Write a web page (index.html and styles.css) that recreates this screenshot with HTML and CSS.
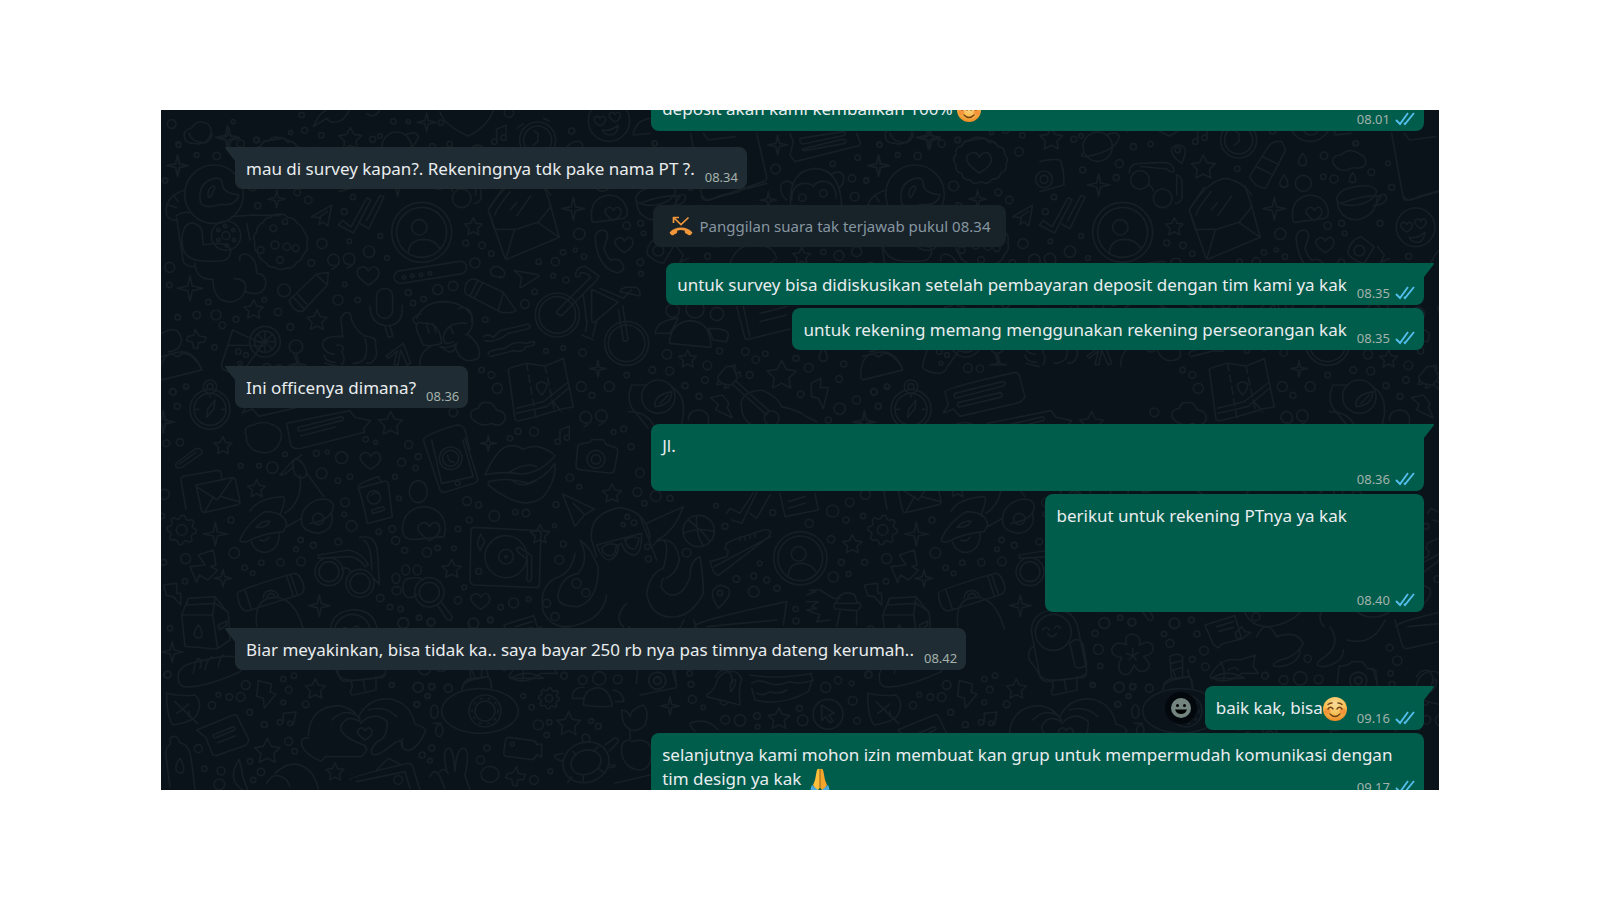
FILE: index.html
```html
<!DOCTYPE html>
<html lang="id">
<head>
<meta charset="utf-8">
<meta name="viewport" content="width=device-width, initial-scale=1">
<title>Obrolan</title>
<link rel="stylesheet" href="styles.css">
</head>
<body>
<svg class="defs" aria-hidden="true">
  <defs>
    <symbol id="ticks" viewBox="0 0 20 14"><path d="M1 8l4 4L13 1M9 11l1 1L19 1" fill="none" stroke="currentColor" stroke-width="1.9"/></symbol>
    <radialGradient id="skin" cx="50%" cy="30%" r="75%"><stop offset="0" stop-color="#f6dc9c"/><stop offset=".55" stop-color="#f8c055"/><stop offset="1" stop-color="#e8801c"/></radialGradient>
    <symbol id="blush" viewBox="0 0 24 24">
      <circle cx="12" cy="12" r="12" fill="url(#skin)"/>
      <circle cx="4.500" cy="14" r="3" fill="#f4782c" opacity=".55"/><circle cx="19.500" cy="14" r="3" fill="#f4782c" opacity=".55"/>
      <path d="M5 12q2.500-3.500 5 0M14 12q2.500-3.500 5 0M7 17q5 5 10 0M5 7.500q1.500-1.500 4-1.500M15 6q2.500 0 4 1.500" fill="none" stroke="#6e4014" stroke-width="1.400" stroke-linecap="round"/>
    </symbol>
    <symbol id="pray" viewBox="0 0 20 24">
      <path d="M9.700 1Q7 0 6.500 4L5 12 3 17l4 6 2.700-3z" fill="#fbbf3c"/><path d="M10.300 1Q13 0 13.500 4L15 12l2 5-4 6-2.700-3z" fill="#f5a52c"/>
      <path d="M10 2v18" stroke="#d97a16"/>
      <path d="M2 17l6 5-2 2H1q-1-4 1-7zM18 17l-6 5 2 2h5q1-4-1-7z" fill="#4ba9dc"/>
    </symbol>
  </defs>
</svg>
<main class="chat">
  <svg class="wallpaper" viewBox="161 110 1278 680" preserveAspectRatio="xMinYMin slice" aria-hidden="true">
    <defs>
    <g id="tile">
      <g transform="translate(150 100) scale(.3333)" data-dots="65,72,13 86,135,7 45,242,7 140,165,7 200,168,11 272,131,11 319,120,7 249,65,6 455,45,8 464,91,9 422,98,6 514,106,8 730,64,8 690,108,7 775,65,6 873,68,8 1077,38,14 1265,93,9 323,317,9 475,300,11 609,291,8 583,335,9 516,431,15 598,424,7 484,489,10 691,408,7 657,455,17 711,474,7 947,429,9 996,436,10 1024,461,8 975,489,15 584,553,7 402,571,19 564,600,15 623,600,8 775,578,9 789,609,8 821,597,8 863,569,15 909,558,14 1166,485,8 1216,485,12 1239,457,8 1302,470,8 1276,450,6 1288,402,17 1430,377,11 1472,370,9 1481,400,7 1471,487,10 1473,521,7 1210,527,7 1248,540,9 1154,575,8 1125,612,13 1006,659,8 59,502,15 58,555,8 175,606,8 83,652,8 140,645,11 198,645,15 258,658,9 217,676,10 343,599,7 384,636,11 421,681,10 193,742,8 109,859,7 69,876,9 1188,753,7 1240,744,7 1298,758,11 995,810,8 1024,825,10 1042,865,15 1430,825,8 1294,860,15 1378,860,15 1326,886,9 1104,994,9 1152,995,13 1080,1015,8 1421,987,9 1391,996,7 647,1018,8 677,1027,6 776,1034,12 49,1030,10 90,1027,11 910,937,13 762,532,5 787,527,5 813,524,5 840,520,5 370,385,10 375,435,12 410,440,11 437,445,10 332,450,10 390,480,10 405,365,8 205,390,5 225,378,5 250,390,5 205,420,5 230,436,5 252,420,5 265,755,8 288,765,7 270,790,6"
         data-stars="601,118,36 970,381,28 311,630,30 501,662,32 722,972,38" data-sparks="83,197,32 380,297,26 120,565,38 232,112,36 830,67,28 1270,326,34 1344,806,25 40,966,34" data-hearts="655,525,30 1423,433,25 1350,62,16 1395,50,16 1390,340,22">
        <path d="M105 118q-10-28 20-34q15-28 45-14q22 16 8 42q-16 26-45 18q-22 0-28-12M330 140q15-25 40-20q30-10 40 0q25 5 30 20M490 80q20-50 60-60l50 5q-20 50-60 40l-10-10zM650 40q20 20 40-10M870 35q10 40 85 73q60-30 75-78"/>
        <circle cx="740" cy="140" r="44"/><path d="M695 160q-10 10 10 10q90-15 100-60q-5-20-40-5"/>
        <path d="M1040 125V88l28-12v35"/><circle cx="1033" cy="125" r="8"/><circle cx="1061" cy="113" r="8"/>
        <circle cx="1163" cy="120" r="54"/><circle cx="1163" cy="120" r="42"/><path d="M1152 92l12 8v24l-14 12M1100 85l20-14M1180 55l18 8"/>
        <circle cx="1377" cy="62" r="62"/><path d="M1357 90q25 5 48-15q-3 30-25 30q-18-2-23-15zM1450 100q10-40 50-45M1450 105l50-5"/>
        <circle cx="192" cy="283" r="88"/><path d="M152 310q-12-60 40-75q25-5 25 20q5 25 50 30q-10 35-55 28q-45 15-60-3zM175 290q-5-25 15-32q10 2-2 18q-5 20-13 14z"/>
        <path d="M105 270q-65 20-55 75q8 18 30 15M70 285l15 20M55 315l25 8M80 355l20 130q10 18 34 14M78 348q20-15 40-10M160 435q80-15 82 20q-5 30-35 28q-70 5-90-12q-25-15-20-65q5-35 30-38q32 10 30 35zM245 350l60-5 85 2M290 370l10 50"/>
        <path d="M387 343q18-3 25 10q20-2 28 15q20 10 22 28q15 15 8 32q8 20-10 35q-5 20-20 24q-10 20-30 17q-20 10-35-2q-20 2-28-15q-20-8-22-25q-15-14-10-34q-10-20 5-32q0-20 18-27q8-18 25-17q10-12 24-9z"/>
        <circle cx="228" cy="407" r="44"/><circle cx="228" cy="407" r="12"/>
        <path d="M134 490q5 50 55 48q0 65 50 68q45-5 48-45q0-25-35-25M285 575q60 20 63-30q-5-25-28-25q0-50-35-58q-20 0-15 20"/>
        <path d="M418 600l82-78 35-5-3 38-75 80q-30 0-39-35zM430 592l32 34M440 580l30 32M500 525l30 28"/>
        <path d="M545 508q25-10 22-30a17 17 0 1 0-12 18M590 505q27-10 24-30a17 17 0 1 0-12 18M1302 980q25-10 22-30a17 17 0 1 0-12 18M1347 975q27-10 24-30a17 17 0 1 0-12 18M1050 535q20-5 12-22q-20-25-40-5q-5 25 30 22"/>
        <path d="M565 375l12-14 26 20 48-88 12 6-52 100zM632 372l25 14 45-95-12-5-40 75M485 350l60-34-12 62-14-12-12 8 4-20zM508 352l24-18"/>
        <circle cx="815" cy="397" r="90"/><circle cx="815" cy="397" r="75"/><circle cx="808" cy="382" r="23"/><path d="M775 462q0-42 45-44q35 0 50 28"/>
        <rect x="731" y="498" width="220" height="38" rx="19" transform="rotate(-9 841 517)"/>
        <path d="M1015 330l45-68M1015 330l50 145q4 3 8 2l155-65-32-115-15-40M1015 330l18 58h60M1093 390l-24 82M1093 390l70-23 65 45M1165 367l36-45M1035 345q0-12 45-70M1080 330l20-22M1100 348l42-60"/>
        <path d="M1335 410q10-25 30-18q12 5 5 28l-8 25q10 30 22 36q25-12 38 20q-5 20-25 16q-55-15-62-107zM1325 350q-5-55 50-65q50 2 57 50q2 15-12 20l-90 12q-5 0-5-17z"/>
        <rect x="680" y="565" width="48" height="90" rx="24"/><path d="M660 620q2 55 55 58q45-5 42-62M705 680l10 32 14-4-10-32"/>
        <path d="M945 565q5-30 30-28l85 40 38 55q-10 8-45 5l-105-55q-5-5-3-17zM985 540l-25 48M998 548l-25 46M1060 580l-15 50M1093 512l70 12q8 3 2 6l-50 32q-5 2-5-4l5-25z"/>
        <circle cx="1222" cy="645" r="66"/><circle cx="1222" cy="645" r="55"/><circle cx="1430" cy="730" r="66"/><circle cx="1430" cy="730" r="55"/>
        <path d="M1222 632l100-100q-12-15-30-14q-5 20-15 10q0-30 30-28l40 28-6 12-105 106q-20-2-14-14zM1325 568l80 38-70 60q-10 5-10-10zM1300 585l10 80M1405 630l15 90q10 8 14-2l-16-100M1350 565l70 30 25-25M1410 575q5-18 50-12q12 5 10 25zM1340 665l-12 45M1312 665l-5 30M1295 705l35 15"/>
        <path d="M797 672q-20-20 15-30M800 655q20-50 85-50q60 5 82 45q5 40-20 55M800 690q-5-30 20-20q50-5 55 60q-20 10-55 5zM950 670q-60-5-70 40q0 30 30 15M870 740q25 8 50-10q-5 30-25 25zM850 735q-45 20-40 65M915 740q20 60 70 35q15-35-30-70M925 625q45-10 40 40M830 675l8 25M850 670l8 28M900 680l10 20"/>
        <path d="M578 712l-5-55q12-30 28-15q5 40 40 65q30 5 35 12l4 45q-10 30-30 25M578 710q-60-5-60 25q5 25 35 28M522 765q5 22 35 22M525 790l40 10M560 735q30 0 15 20q15 25 0 40M645 715q10 30 0 60q-15 15-35 15M708 768l52-38 22 60-10 5-20-45-8 45-12-2 10-40-28 22z"/>
        <path d="M1000 710q15-10 30 2l20-20 85-20q12 8-5 16l-55 12q-40 30-70 22M1015 765q-5-15 50-20q30-25 60-15l28-5q5 15-25 15q-10 20-38 12l-70 18"/>
        <path d="M248 690l90 42-50 70q-10 30-60 10q-20-5-10-30zM235 735l105 3"/><circle cx="345" cy="725" r="46"/><circle cx="345" cy="725" r="32"/><path d="M345 693v64M313 725h64M322 702l46 46M368 702l-46 46"/>
        <circle cx="438" cy="740" r="20"/><path d="M432 762l10 28-25 5h50l-20-5-8-28M135 688l12 20 22 4-6 14-18 2-2 18-12-2-4-18-18-4 4-12 18-4z"/>
        <path d="M35 700q50-30 60 20q-5 35-40 35M35 770l35-10q60-20 85 50l-120 30"/>
        <circle cx="180" cy="928" r="60"/><circle cx="180" cy="928" r="48"/><circle cx="180" cy="860" r="20"/><circle cx="180" cy="860" r="9"/><path d="M195 900l-22 28-3 24 22-26zM180 882v10M136 928h10M214 928h10"/>
        <path d="M410 970l190-38 15 20 47 10-22 25 4 10-190 48q-30 5-33-15zM445 982l130-32q12 5 0 12l-125 32q-10-4-5-12M452 1008l105-27"/>
        <path d="M290 1010q-15-30 20-35q30-15 60 0q35 15 20 50q-20 50-80 25q-25-20-20-40M965 955q-10-25 20-30q5-25 40-15q10 10 15 20q30 5 25 30q-15 25-40 10q-30 15-60-15"/>
        <path d="M1075 808q5-5 55-18l55 8 55-22 30 145-30 5-75 22-60 15-10-5zM1100 940l90-20 65-55M1100 925l80-20 70-55M1205 900l30 35M1175 885q-18-20-15-32q15-15 30 0q3 12-15 32z"/><path d="M1130 790l28 165M1185 798l30 140" stroke-dasharray="22 14"/>
        <path d="M820 1020q0-15 100-45q20 0 25 15l15 60M1230 1025v-35l28-12v35"/><circle cx="1223" cy="1025" r="8"/><circle cx="1251" cy="1013" r="8"/>
      </g>
      <g transform="translate(150 440) scale(.3333)" data-dots="405,43,7 499,40,9 532,36,6 272,77,7 327,77,7 367,83,17 515,100,16 575,53,18 600,110,8 564,122,8 755,67,12 805,50,9 797,84,8 735,110,7 747,175,7 585,187,13 583,223,7 605,258,16 565,305,10 490,316,9 452,300,8 438,328,7 453,364,13 391,367,11 334,368,8 284,383,8 308,400,7 253,339,16 243,240,9 107,356,15 105,424,8 43,163,15 686,275,8 727,267,10 737,302,12 764,331,9 831,337,14 863,324,8 912,325,7 924,267,8 958,240,9 951,183,13 986,195,9 1033,228,16 1096,216,8 1128,219,11 1260,113,11 1288,140,7 1218,194,9 1214,257,6 1240,312,9 1228,359,13 1462,156,13 1470,98,13 1443,20,9 691,474,11 720,501,8 752,507,8 760,549,16 808,533,7 844,546,11 924,481,11 943,442,7 986,394,9 1052,502,8 1091,489,15 1136,478,7 971,550,15 1021,540,9 60,565,8 53,704,10 287,735,13 205,764,7 238,771,10 272,771,13 186,796,11 299,817,9 343,854,9 400,717,8 432,707,8 416,749,10 400,787,7 467,793,10 416,904,12 434,934,8 145,926,12 163,986,8 213,993,12 300,964,8 333,996,11 310,1020,8 208,1033,16 805,742,15 846,740,9 895,745,12 833,768,7 726,735,7 801,793,8 845,924,9 817,945,9 840,962,7 1011,924,9 992,960,12 1120,768,7 1145,802,8 1165,855,15 1198,847,8 1190,885,8 1243,707,10 1324,843,7 1345,859,9 1152,1020,13 1201,994,7 1432,230,7 1452,248,8 1420,254,6"
         data-stars="219,18,28 320,147,28 1386,162,30 1170,284,30 905,388,30 496,748,32 352,935,40 1256,853,38 555,997,28" data-sparks="196,282,36 219,415,26 508,497,32 67,636,32 1015,10,24" data-hearts="662,60,28 992,482,26 838,272,30 645,880,20" data-gears="95,270,44 1197,775,32">
        <path d="M78 70l60-45q20 0 18 15l-60 42q-22 8-18-12zM88 72l50-35M108 208L93 120q0-10 10-12l100-17q12 0 12 22M138 135l108-22q8 0 10 6l14 65q0 8-6 10l-100 24q-8 0-10-8zM140 140l62 40 46-65M165 215l25-45M268 185l-55-15"/>
        <path d="M270 300q20-50 75-85q60 0 65 40l-10 20q-60 5-110 30q-18 3-20-5zM300 215q20-40 100-45q10 5-10 55M410 260l45-25q0-35 45-55q40-10 50 15q0 45-70 55M455 235q-5 40 50 45q50-10 40-60M450 105q10 80-45 115M470 100l52 70M430 60l-40 45q10 5 40-25M430 65q-5 40 20 50q20 0 20-20q-10-35-35-40M420 70l35-25M318 262q20-22 42-18q-10 20-42 18M304 305q10 32 42 32q40-5 42-55"/><circle cx="505" cy="237" r="17"/><circle cx="95" cy="270" r="16"/><path d="M330 300q15 8 28-8"/>
        <circle cx="537" cy="395" r="42"/><circle cx="537" cy="395" r="30"/><circle cx="630" cy="430" r="42"/><circle cx="630" cy="430" r="30"/><path d="M505 345l90-15q45 10 60 45l-10 5q-20-30-50-30l-90 5zM575 385q18-5 28 10M628 293q50-15 55 50l5 90-20-20M640 300q25 10 25 90"/>
        <path d="M625 145l80-22q8 0 10 8l12 100-75 20q-10-60-27-106zM625 140q0-10 60-30l10 18M665 165q5-10 20-5M665 210l35-10q8 8-2 12l-30 8z"/><circle cx="672" cy="172" r="20"/><ellipse cx="805" cy="155" rx="27" ry="33"/><path d="M757 265q5-60 65-65q60 5 65 65l-5 25-85 8q-40 5-40-33z"/>
        <path d="M820 0l50 150q5 8 15 7l90-28q10-5 8-15L945-5M845 0l30 130 95-20L938 0"/><circle cx="902" cy="55" r="34"/><circle cx="902" cy="55" r="24"/><circle cx="923" cy="130" r="7"/><path d="M893 45q0 20 20 22"/>
        <path d="M1005 105q40-90 80-88q20 0 35 12q15-10 40-10q40 10 55 28q-40 50-100 55q-60-10-110 3zM1015 125q60-15 120 5q50-15 80-60q5 50-35 100q-60 50-165-35zM1080 95q50-30 80-15M1090 125q30 20 70-5"/>
        <path d="M1290 12l30-5 5-8h35l10 15 25 8q10 3 8 15l-10 55q-3 8-15 7l-90-10q-10-3-10-12l5-55q0-8 7-10z"/><circle cx="1338" cy="58" r="27"/><circle cx="1338" cy="58" r="14"/>
        <path d="M1238 162l95 45-30 18-28 34zM1270 190l30 30"/>
        <path d="M970 262l195 10q8 0 8 8l-5 155q0 8-8 8l-190-8q-10-5-10-15l3-148q0-8 7-10zM992 282q10 15 12 25q-10 15-14 25q-8-15-8-25zM1100 325q10-8 18 5q20 8 27 20v60q0 15-8 15q-12-5-5-20v-45l-15-15q-15-5-17-20"/><circle cx="1068" cy="350" r="63"/><circle cx="1068" cy="350" r="22"/><circle cx="1068" cy="350" r="3"/>
        <path d="M1325 300q-10-80 85-97q80 10 90 90M1325 300l15 50M1340 315l135-35q0 60-20 65q-30 0-40-35l-10 5q0 40-30 45q-20-5-35-45zM1355 325q20-20 45-10q-5 35-20 32q-20 0-25-22M1425 300q20-15 42-5q-5 35-20 32q-18-5-22-27"/>
        <path d="M1290 300q30 60-5 100q-50 10-60 60q-10 40 60 40q60-20 60-120l-25-50q-15-20-30-30M1275 340q-10 60-60 75q-50 30-35 100q30 60 100 40q80-20 90-90M1430 490q-40 40-10 70"/><circle cx="1280" cy="430" r="14"/><circle cx="1308" cy="458" r="12"/><circle cx="1190" cy="490" r="12"/><circle cx="1215" cy="530" r="12"/>
        <path d="M95 525l20-50 80-5 40 50 5 80-40 27-95-8zM98 525h90l15 100M115 475l-5 20 85-5 38 25M188 525l7-52M145 555q-18 25-10 35q10 8 20 0q5-15-10-35zM205 555l25-12v12l-22 15z"/>
        <path d="M262 460q0-10 170-60q20 0 30 40q0 20-15 25l-155 48q-25 0-30-53zM285 450l20 60M410 408l20 60M422 405l20 58M320 560q-10-90 60-88q55 5 80 95"/><path d="M340 475q0-22 22-24q20 2 24 20M350 472q5-12 14-12q10 2 12 12"/>
        <circle cx="838" cy="457" r="44"/><circle cx="838" cy="457" r="30"/><path d="M862 495l30 45q15 5 15-10l-32-42M800 465q-30 20-40-10q-5-40 20-40q30-5 40 5"/><ellipse cx="738" cy="415" rx="12" ry="15"/><ellipse cx="767" cy="390" rx="12" ry="15"/><ellipse cx="802" cy="390" rx="12" ry="15"/><ellipse cx="740" cy="452" rx="14" ry="12"/>
        <path d="M120 380l45-5-20-30 45-15 8 45-15 5 20 10-30 30-25-15-8 22zM40 435l40-5v30h12v35l-22-25-20-3z"/>
        <path d="M85 715q-5-40 60-50q70-20 110-15q40 20 15 45q-110 50-170 45q-15-5-15-25M130 700q5-40 15-45q15 5 5 30M165 690q5-30 20-40M205 680q5-30 15-35M325 722l40 10-5 25 18 5-35 42-3-30-20-5z"/>
        <path d="M50 760q40 10 85 5q25 25 5 60q-10 20-70 30q-20-20-20-95zM75 785l68 66M98 808l18-16M98 808l-18 12M118 830l-2-16M140 870l110-45q10-3 12 5l35 70-8 15-90 32q-10 0-12-5l-20-50zM190 885l60-25q10 5 0 12l-55 22q-8-2-5-9M203 908l52-20M400 845v-25l38-4-8 38"/><circle cx="390" cy="847" r="8"/><circle cx="420" cy="850" r="7"/>
        <path d="M475 885q5-85 90-88q40 5 60 35q30-60 95-55q60 10 75 75q30 10 32 20q-20 50-50 60q-30-5-20-35M545 840q30-30 60-20q30 10 25 25q-40-25-58 15q0 30 70 55q20 15-10 35H525q-10 20-20 10q-55-25-50-60q10-10 20-5M655 810q50-15 85 20M632 850q40-40 80-5q0 50-30 60q-30 30-10 40q20 0 60-35q30-20 25 15"/>
        <path d="M560 695q10 30 60 25q80-5 85-20M600 720q10 15 5 25q-10 20 5 20l68-15v-40M640 720l5 30"/>
        <ellipse cx="990" cy="813" rx="115" ry="67"/><circle cx="1005" cy="813" r="48"/><circle cx="1005" cy="813" r="30"/><circle cx="1005" cy="813" r="39" stroke-dasharray="6 18"/><path d="M935 750q0-20 30-30l50-10q10 10 10 35M965 690l10 22M1010 690l5 20"/><ellipse cx="853" cy="815" rx="11" ry="20"/><ellipse cx="868" cy="872" rx="11" ry="18"/><path d="M850 850h25"/>
        <circle cx="1348" cy="715" r="20"/><circle cx="1298" cy="720" r="13"/><circle cx="1403" cy="718" r="13"/><path d="M1300 795q0-50 45-52q35 5 42 55q-40 5-87-3M1300 775h-33q0-35 35-33M1390 750q30 5 32 35h-25M1080 715q50-30 100 0z"/><circle cx="1197" cy="775" r="11"/>
        <path d="M1415 810q20 0 25 20q5-25 40-35q20 20 5 60q-20 20-40 15q-30-10-30-60M1440 870v30q-30 0-25 40q10 50 60 50q30-5 30-60q-10-40-60-25M1075 892l75 10q10 3 10 12l15-2v40l-15-8q-5 15-15 15l-75-10q-10 0-8-15l5-35q2-7 8-7z"/><circle cx="1087" cy="912" r="6"/>
        <ellipse cx="1308" cy="967" rx="70" ry="60" transform="rotate(-20 1308 967)"/><ellipse cx="1308" cy="967" rx="46" ry="36" transform="rotate(-20 1308 967)"/><path d="M1300 907q-10-25 8-25q15 5 10 22M1365 915l30-22q15 5 8 15l-25 25M1240 940l-25 5q-5 12 22 18M1375 975l20 0q5 8-22 8M1265 1010l-12 18M1345 920l-15 15M1270 935l8 10M1345 985l20 15M1300 1005v20"/>
        <path d="M890 990q-15-60 5-65q15-5 20 70q5-80 30-68q15 10 0 80l15 43M840 1010q15-30 30 0l15 35M870 995q10-15 25 5"/><ellipse cx="1020" cy="1003" rx="27" ry="24"/><path d="M1100 980l5 20 22 4-6 14-18 2-2 18-12-2-4-18-18-4 4-12 18-4z"/>
        <path d="M60 895q10-10 22-2l8 15q30 5 35 60l10 80M60 900l2 12q-20 10-12 50l10 80M90 955q-18 25-10 38q10 12 20 2q5-15-10-40zM268 958q-40 60 10 92M268 960q10 40 10 50l15 40M375 1000q60-55 110 0q15 20 20 50M350 1030q20-40 60-10l10 20M600 1020q0-10 175-50q12 0 15 15l20 65M620 1025l145-30 15 50M680 990l35-35 40 20M1395 1030l105-25"/><circle cx="745" cy="1020" r="13"/>
      </g>
      <g transform="translate(640 100) scale(.3333)" data-dots="43,130,8 578,191,8 653,173,8 407,207,14 636,235,11 679,241,8 644,290,13 941,258,15 1137,155,13 1075,277,10 487,293,11 550,280,11 203,469,9 550,456,8 597,467,15 650,455,15 718,133,8 953,120,9" data-stars="485,470,28" data-sparks="413,135,30 715,197,30 385,300,25 870,115,32" data-hearts="1018,185,34">
        <path d="M450 100l10 25-10 40 15 20 180-45q20 0 15-15l-10-25M480 115l130-20q12 5 0 12l-120 25q-12 0-10-17M485 148l120-30q20 0 10 12l-120 22z"/>
        <path d="M1018 112q20 0 28 15q20-5 28 12q22 3 20 25q14 12 4 28q5 20-16 28q-5 20-25 17q-15 20-35 8q-20 12-32-5q-22 0-25-20q-22-5-17-27q-15-15 0-30q-5-20 17-25q5-20 25-15q10-15 28-11z"/>
        <path d="M452 320q-8-110 75-115q75 5 78 115M455 300q0-50 40-50q20 0 25 10q10-20 40-15q30 10 28 50M440 300q-25-20-15-50q20-15 35 5M575 222q25-15 35 5q5 20-10 35M350 100l30 130q2 10-10 15l-160 55q-15 3-20-10M230 290l150-40M190 100l15 20 80-10M0 310q80-30 120-20l-20 30M750 100q10 30 50 28q20-10 20-28"/>
        <path d="M20 460q5-40 40-50l40 30-30 50q-30-5-50-30zM110 440l20 25-10 22 25-12M270 490q20-60 80-55q50 0 60 40l-20 15"/><circle cx="55" cy="452" r="16"/>
        <circle cx="98" cy="632" r="20"/><circle cx="231" cy="642" r="20"/><circle cx="165" cy="627" r="27"/><path d="M88 730q5-65 65-68q60 5 60 80zM45 700q5-40 70-45l-25 45zM205 685q60 0 60 20l-5 20-40-5zM290 620l25 95q5 5 15 2l120-30M310 620l20 90M350 610l100-15M360 640l80-20M360 665l80-20"/>
      </g>
      <g transform="translate(640 345) scale(.3333)" data-dots="81,28,14 37,75,10 89,78,12 195,105,10 135,122,9 177,154,9 202,61,13 239,18,9 316,20,11 347,44,11 376,26,8 329,90,10 468,40,9 506,68,13 482,148,10 597,102,10 611,57,9 599,191,17 565,225,9 650,165,12 701,140,10 741,125,8 715,184,9 984,69,13 1020,71,11" data-stars="143,43,28 425,92,46" data-sparks="673,230,28">
        <circle cx="55" cy="155" r="50"/><path d="M45 185q-5-35 50-45q0 40-50 45zM60 175l25-25M95 125q50 30 30 110M20 120h-45q-20 50 10 80l40 50M-35 200q60 0 80 50"/>
        <path d="M233 95l25-30 20-2 15 35-18 22q-40 0-42-25zM280 120l100 90M290 110l100 90M305 190q-10-50 60-55q50 20 60 50q60 15 65 25l40 20M305 190q0 30 30 50M272 65l12-6 4 12M290 85l10-5 2 14M235 105l-4 14 14-2M255 118l-2 12 14-4"/><circle cx="395" cy="220" r="22"/>
        <path d="M212 158l35-8 20 25-5 12 15 32-50-25 8-15zM513 115l30-15-2 28h24l-15 62-15-30-20-5zM550 10q-18 25-10 35q10 8 20 0q5-15-10-35zM145 225q0-30 35-30q30 5 25 40M663 100q-5-60 35-75q10 10 20 10q15-20 40 0q25 20 30 40l-115 28q-10 0-10-3z"/>
        <path d="M915 140q0-10 210-58q10 0 15 15l15 60-15 15-180 42-20-22-30 12 15-25zM945 145l145-36q12 5 0 14l-142 36q-10-4-3-14M955 173l125-30q15 5 0 14l-122 29q-10-4-3-13"/>
      </g>
      <g transform="translate(640 410) scale(.3333)" data-dots="47,258,16 90,265,9 13,280,8 228,287,7 398,308,9 255,349,9 140,428,13 22,410,8 25,447,9 629,277,13 578,303,18 618,330,9 669,318,8 508,340,12 573,388,11 604,457,9 674,457,9 580,501,15 626,492,7 359,460,7 289,507,10 341,498,9 380,510,9 341,545,16 411,535,9 467,597,8 468,633,9 149,790,8 153,823,9 157,868,12 190,892,7 256,929,13 300,931,17 351,918,10 353,950,7 478,895,9 488,931,16 557,832,15 594,811,11 635,820,7 638,872,13 651,932,10 685,794,11" data-stars="637,404,30 417,927,34" data-sparks="90,888,28">
        <circle cx="176" cy="363" r="47"/><path d="M130 370q45-20 92-5M170 318q-5 50 20 90M145 330q40 30 65 65M210 455l50-15 5-15-10-10 5-15 20-10 90-30q15-3 22 5l-5 15-150 115q-15 5-27-40zM222 470l170-90M300 380v12M315 378v12M330 374v12M345 370v12"/>
        <circle cx="481" cy="445" r="80"/><circle cx="481" cy="445" r="67"/><circle cx="476" cy="432" r="22"/><path d="M445 500q0-40 38-40q30 0 45 25M235 595q-25-40-15-55q20-25 45-5q15 20-30 60z"/><circle cx="240" cy="549" r="8"/>
        <path d="M500 555l25-10-15-5h30l40 25h20M500 575h35l-20 15 15 5-30 5 40 15-10 20 40-5M595 560q25-20 50-5l5 20q20 8 8 22l-8 5-65-5q-8-12 5-22zM590 580h60M600 605l-10 45M650 605v40"/>
        <path d="M260 310l10-15 30 15 40-62M275 330l30 10 45-92M330 310l20 15 40-70M420 250l15 70 100-20-10-50M445 275l50-15M445 295l50-15M165 650q-10-15 275-75l-10 70M200 650l210-20"/>
        <path d="M20 550q10-60 50-75q20-70 0-85q-20 0-30 15M70 390q40 0 48 60q-8 40-40 55M180 440q-30 10-30 60q-20 60-60 55q-40-20-20-50M180 440q10 60 10 110q-40 80-110 70q-50-10-60-70M0 320l50 130M20 340l110-50q-30 80-80 100"/>
        <path d="M0 855l100-20q12 0 10-10l-15-50"/><circle cx="52" cy="812" r="25"/><circle cx="52" cy="812" r="10"/>
        <path d="M200 855q25-15 30-40q15-35 50-30M200 860l100 25q-5-60 5-75q-5-20-20-25M272 845q-5-40 15-35q0 20-15 35M240 875q5 18 22 5M330 795q90 15 185-5M335 820q20-15 50 0q30 10 60-5q40 10 75-5l-10-20M335 835l10 35q80 20 160-25l10-30M350 850q20 10 40-5q30 10 50-5"/>
        <circle cx="564" cy="913" r="45"/><path d="M545 885l38 25-16 5 12 18-10 5-12-18-12 12zM150 940q50-20 85 20M150 945l15 20"/>
      </g>
      <g transform="translate(1040 100) scale(.3333)" data-dots="238,191,12 280,140,9 332,132,8 128,210,9 229,233,9 592,206,8 790,250,24 852,167,11 850,230,8 882,237,12 994,217,10 1044,190,7 1055,262,9 1020,370,9 949,130,7 101,118,9" data-stars="490,203,38" data-sparks="176,255,34" data-hearts="1100,380,16 1142,370,16">
        <circle cx="300" cy="240" r="28"/><circle cx="368" cy="295" r="28"/><path d="M268 220q0-30 30-30l80-3q22 5 25 25q-10 10-22-5l-80-8M325 255q12 5 15 18M408 225q15 0 18 20v50q-5 15-20 15M410 225v60"/>
        <path d="M425 190q-35-25-30-45q20-20 40 0q5 15-10 45z"/><circle cx="413" cy="150" r="8"/><path d="M628 230l57-90q15-20 40-15l12 25-60 115q-30 0-49-35zM650 200l50 25M668 170l50 25M788 160q-18 25-10 33q10 8 20 0q5-15-10-33zM732 225q-18 25-10 33q10 8 20 0q5-15-10-33zM938 218q-12 20-8 27q8 6 16 0q4-12-8-27z"/>
        <path d="M890 300q0-30 55-40q60-10 65 15q-10 30-60 40q-50 5-60-15M892 305q5 50 55 55q60-10 65-65M1010 290q30-15 30 5q-5 20-40 22M878 185q0-20 25-20q20-20 45-10l25 15q15 30-20 35q-15-5-30 5q-35 5-45-25zM1055 100l35 195q5 8 15 5l95-25"/>
        <path d="M0 185q40-10 60-5q12 20 12 75l-72 20M450 325q60-90 110-90q50 10 75 50M1107 412q25 5 48-15q-3 30-25 30q-18-2-23-15z"/><circle cx="12" cy="238" r="25"/><circle cx="12" cy="238" r="12"/><circle cx="1127" cy="382" r="58"/>
      </g>
      <g transform="translate(960 600) scale(.3333)" data-dots="433,70,16 480,53,8 515,67,12 405,100,9 415,148,15 421,198,8 397,254,7 477,262,15 518,260,9 568,265,12 505,288,7 473,313,9 643,70,16 695,60,8 612,102,8 630,130,12 711,102,9 732,152,13 697,178,9 736,200,11 1043,176,11 915,227,10 1289,143,10 1312,182,14">
        <path d="M215 100q-5-60 60-70q70-5 80 60l25 120q0 20-10 22l-110 12q-15 0-20-15zM262 100q15 20 28 0M248 90q10-15 20 0M283 85q10-15 18 0M330 130q25-25 40 5l10 60q-20 15-35 5zM220 140q-20 10-12 40l30 40"/><circle cx="280" cy="97" r="54"/>
        <path d="M500 135q-10-30 18-33q28 5 20 33q35-20 42 8q0 22-30 26q30 25 8 42q-22 12-36-16q-12 38-36 26q-20-20 0-48q-35-5-30-28q12-25 44-10zM518 145v18M500 160l18 8M535 158l-16 8M508 180l10-12M528 180l-8-12"/>
        <path d="M735 75l90-28 20 70-60 15-10 12-15-10zM770 80l50-15M775 95l45-13M825 100l20-20 10 15 18 2-25 18-18 0zM750 230q30-60 90-50l45-15-5 35 15 20h-50q-50 40-95 10zM780 185q20 25 10 55M805 210q20-15 30 0"/>
        <path d="M630 170q20-15 38 0v60M630 175l5 60M635 190l30-8M638 210l30-8M610 265q0-25 30-30l45-5q12 5 10 30"/>
      </g>
      <g transform="translate(1140 620) scale(.3333)">
        <path d="M350 50q30-60 60 0q60-20 80 20q-20 40-70 50q-40 20 0 20q60-10 60-50M570 20q40 60-30 100q-20 20 10 20q60-10 60-50M620 60q80 20 115-60M765 0l20 70q5 20 20 15l90-20M592 190l5-50 25-5 15-10h30l15 20 25 5 5 45M830 170q10-20 30-20q20 5 20 40"/><circle cx="655" cy="182" r="26"/><circle cx="655" cy="182" r="12"/>
      </g>
    </g>
    </defs>
    <g class="doodles"><use href="#tile" x="-701"/><use href="#tile"/><use href="#tile" x="701"/></g>
  </svg>

  <section class="thread">
    <article class="bubble out wide tall"><p>deposit akan kami kembalikan 100% <svg class="emoji"><use href="#blush"/></svg></p><footer><time>08.01</time><svg class="ticks"><use href="#ticks"/></svg></footer></article>
    <article class="bubble in first"><p>mau di survey kapan?. Rekeningnya tdk pake nama PT ?.</p><footer><time>08.34</time></footer></article>
    <p class="call">
      <svg class="missed" viewBox="0 0 24 20" aria-hidden="true"><path d="M4 1.500h6M4.500 1v6M4.500 1.500l7.500 7L19.500 1.500" fill="none" stroke="currentColor" stroke-width="1.700"/><path d="M12 11.500Q5 11.500 1 16q-.7.800 0 1.500l1.500 1.500q1 .7 2 0l3-1.700q.7-.5.700-1.300V14.700Q12 13.500 15.800 14.700V16q0 .800.700 1.300l3 1.700q1 .7 2 0l1.500-1.500q.7-.7 0-1.500Q19 11.500 12 11.500z" fill="currentColor"/></svg>
      Panggilan suara tak terjawab pukul 08.34
    </p>
    <article class="bubble out first"><p>untuk survey bisa didiskusikan setelah pembayaran deposit dengan tim kami ya kak</p><footer><time>08.35</time><svg class="ticks"><use href="#ticks"/></svg></footer></article>
    <article class="bubble out"><p>untuk rekening memang menggunakan rekening perseorangan kak</p><footer><time>08.35</time><svg class="ticks"><use href="#ticks"/></svg></footer></article>
    <article class="bubble in first"><p>Ini officenya dimana?</p><footer><time>08.36</time></footer></article>
    <article class="bubble out first wide address"><p>Jl.</p><footer><time>08.36</time><svg class="ticks"><use href="#ticks"/></svg></footer></article>
    <article class="bubble out account"><p>berikut untuk rekening PTnya ya kak</p><footer><time>08.40</time><svg class="ticks"><use href="#ticks"/></svg></footer></article>
    <article class="bubble in first"><p>Biar meyakinkan, bisa tidak ka.. saya bayar 250 rb nya pas timnya dateng kerumah..</p><footer><time>08.42</time></footer></article>
    <div class="row">
      <button class="react" type="button" aria-label="Beri reaksi"><svg viewBox="0 0 20 20"><circle cx="10" cy="10" r="10" fill="#74857f"/><circle cx="6.500" cy="7.500" r="1.500"/><circle cx="13.500" cy="7.500" r="1.500"/><path d="M4 11.500h12q-1.500 4.500-6 4.500t-6-4.500z"/></svg></button>
      <article class="bubble out first tall"><p>baik kak, bisa<svg class="emoji"><use href="#blush"/></svg></p><footer><time>09.16</time><svg class="ticks"><use href="#ticks"/></svg></footer></article>
    </div>
    <article class="bubble out wide long"><p>selanjutnya kami mohon izin membuat kan grup untuk mempermudah komunikasi dengan tim design ya kak <svg class="emoji pray"><use href="#pray"/></svg></p><footer><time>09.17</time><svg class="ticks"><use href="#ticks"/></svg></footer></article>
  </section>
</main>
<script src="doodles.js"></script>
</body>
</html>
```

FILE: styles.css
```css
* { box-sizing: border-box; }

body {
  margin: 0;
  background: #fff;
  font-family: "Noto Sans", "Open Sans", sans-serif;
}

.defs {
  position: absolute;
  width: 0;
  height: 0;
}

.chat {
  position: relative;
  height: calc(100vh - 220px);
  margin: 110px 161px;
  overflow: hidden;
  background: #0b131a;
}

.wallpaper {
  position: absolute;
  inset: 0;
  width: 100%;
  height: 100%;
}

.doodles {
  fill: none;
  stroke: #151f25;
  stroke-width: 5;
  stroke-linecap: round;
  stroke-linejoin: round;
}

.thread {
  position: relative;
  display: flex;
  flex-direction: column;
  gap: 3px;
  margin-top: -23px;
  padding: 0 15px 0 74px;
}

.bubble {
  position: relative;
  display: flex;
  align-items: flex-end;
  justify-content: space-between;
  gap: 10px;
  width: fit-content;
  min-height: 42px;
  max-width: 68%;
  padding: 0 9px 0 11px;
  border-radius: 8px;
  color: #e9edef;
  font-size: 17px;
  line-height: 24px;
}

.bubble p {
  align-self: flex-start;
  margin: 0;
  padding: 10px 0 8px;
}

.bubble footer {
  display: flex;
  align-items: center;
  gap: 5px;
  padding-bottom: 4px;
  color: #a3b3ac;
  font-size: 13px;
  line-height: 16px;
}

.in {
  background: #202c33;
}

.out {
  align-self: flex-end;
  background: #005c4b;
}

.first { margin-top: 13px; }

.in.first { border-top-left-radius: 0; }
.out.first { border-top-right-radius: 0; }

.first::before {
  content: "";
  position: absolute;
  top: 0;
  width: 10px;
  height: 14px;
  background: inherit;
}

.in.first::before {
  right: 100%;
  clip-path: polygon(0 0, 100% 0, 100% 100%, 5% 12%);
}

.out.first::before {
  left: 100%;
  clip-path: polygon(0 0, 100% 0, 95% 12%, 0 100%);
}

.wide { width: 65%; }
.tall { min-height: 44px; }
.address { min-height: 67px; }
.account { min-height: 118px; }

.long footer {
  position: absolute;
  right: 9px;
  bottom: 0;
}

.ticks {
  width: 20px;
  height: 14px;
  color: #53bdeb;
}

.emoji {
  width: 24px;
  height: 24px;
  margin: -4px 0;
  vertical-align: -3px;
}

.pray {
  width: 20px;
  margin: -4px 4px;
}

.call {
  display: flex;
  align-items: center;
  align-self: center;
  gap: 7px;
  min-height: 42px;
  margin: 13px 0 0;
  padding: 0 16px;
  border-radius: 8px;
  background: #182229;
  color: #8696a0;
  font-size: 15px;
  line-height: 24px;
}

.missed {
  width: 24px;
  height: 20px;
  color: #f0963a;
}

.row {
  display: flex;
  align-items: center;
  justify-content: flex-end;
  gap: 8px;
  margin-top: 13px;
}

.row .bubble { margin: 0; }

.react {
  width: 32px;
  height: 32px;
  padding: 6px;
  border: 0;
  border-radius: 50%;
  background: #03080d;
}

.react svg { display: block; }
```

FILE: doodles.js
```js
// Adds the repeated small shapes (dots, stars, sparkles, hearts, gears) to the wallpaper tile.
const NS = 'http://www.w3.org/2000/svg';
const each = (g, key, draw) => (g.dataset[key] || '').split(' ').filter(Boolean).forEach(item => draw(...item.split(',').map(Number)));
const ring = (x, y, n, radius) => Array.from({ length: n }, (_, i) => {
  const a = i * 2 * Math.PI / n - Math.PI / 2, r = radius(i);
  return Math.round(x + r * Math.cos(a)) + ' ' + Math.round(y + r * Math.sin(a));
});
const add = (g, d) => {
  const p = document.createElementNS(NS, 'path');
  p.setAttribute('d', d);
  g.append(p);
};
document.querySelectorAll('#tile > g').forEach(g => {
  each(g, 'dots', (x, y, r) => add(g, `M${x - r} ${y}a${r} ${r} 0 1 0 ${2 * r} 0a${r} ${r} 0 1 0 ${-2 * r} 0`));
  each(g, 'stars', (x, y, r) => add(g, 'M' + ring(x, y, 10, i => i % 2 ? r / 2 : r).join('L') + 'Z'));
  each(g, 'sparks', (x, y, r) => add(g, 'M' + ring(x, y, 8, i => i % 2 ? r / 4 : r).join('L') + 'Z'));
  each(g, 'gears', (x, y, r) => add(g, 'M' + ring(x, y, 32, i => i % 4 < 2 ? r : r * 0.78).join('L') + 'Z'));
  each(g, 'hearts', (x, y, r) => add(g, `M${x} ${y + r}q${-r * 1.5} ${-r} ${-r} ${-r * 1.6}q${r * 0.7} ${-r * 0.5} ${r} ${r * 0.2}q${r * 0.6} ${-r * 0.8} ${r} ${-r * 0.1}q${r * 0.3} ${r * 0.8} ${-r} ${r * 1.5}z`));
});
```
